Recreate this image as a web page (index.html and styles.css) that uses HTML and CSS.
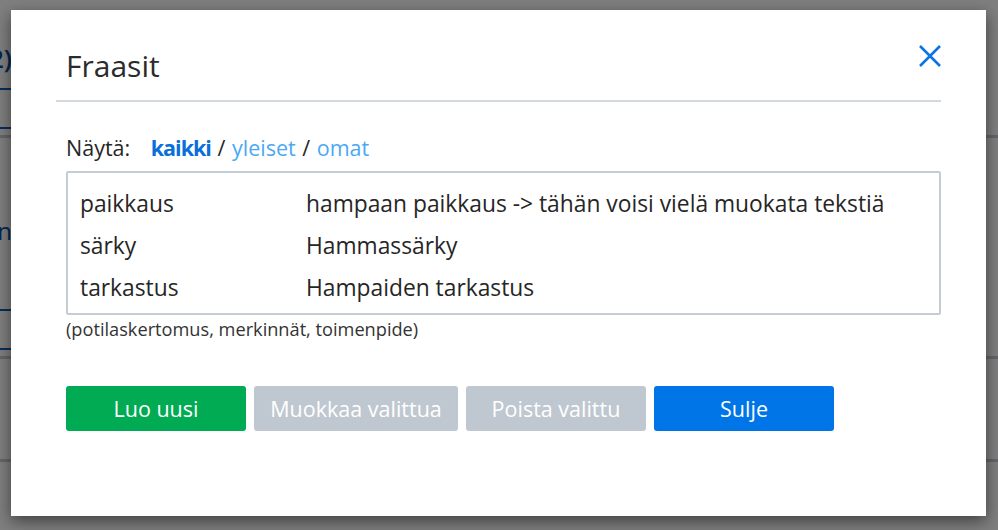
FILE: index.html
```html
<!DOCTYPE html>
<html>
	<head>
		<meta charset="utf-8">
		<title>Fraasit</title>
		<link rel="stylesheet" href="styles.css">
	</head>

	<body>
		<!-- underlying page, dimmed by the backdrop -->
		<div class="page">
			<div class="page-head"><span class="page-title">Käynnit (2)</span></div>
			<div class="page-tab"></div>
			<div class="page-rule"></div>
			<div class="page-row"><span class="page-link">Lisää merkintä uusi kirjoitus on</span></div>
			<div class="page-tab"></div>
			<div class="page-tab short"></div>
			<div class="page-rule"></div>
			<div class="page-gap"></div>
			<div class="page-rule"></div>
		</div>

		<div class="backdrop"></div>

		<div class="modal">
			<div class="modal-header">
				<h2 class="modal-title">Fraasit</h2>
				<button class="close" type="button" aria-label="Sulje">
					<svg width="22" height="22" viewBox="0 0 22 22">
						<path d="M1 1 L21 21 M21 1 L1 21" stroke="#0a74e6" stroke-width="2.6" fill="none"/>
					</svg>
				</button>
			</div>

			<div class="modal-body">
				<div class="filter">
					<span class="filter-label">Näytä:</span>
					<a class="filter-link active">kaikki</a>
					<span class="sep">/</span>
					<a class="filter-link">yleiset</a>
					<span class="sep">/</span>
					<a class="filter-link">omat</a>
				</div>

				<div class="phrases">
					<div class="phrase">
						<span class="phrase-key">paikkaus</span>
						<span class="phrase-text">hampaan paikkaus -&gt; tähän voisi vielä muokata tekstiä</span>
					</div>
					<div class="phrase">
						<span class="phrase-key">särky</span>
						<span class="phrase-text">Hammassärky</span>
					</div>
					<div class="phrase">
						<span class="phrase-key">tarkastus</span>
						<span class="phrase-text">Hampaiden tarkastus</span>
					</div>
				</div>
				<p class="hint">(potilaskertomus, merkinnät, toimenpide)</p>

				<div class="actions">
					<button class="btn btn-green" type="button">Luo uusi</button>
					<button class="btn btn-grey wide" type="button">Muokkaa valittua</button>
					<button class="btn btn-grey" type="button">Poista valittu</button>
					<button class="btn btn-blue" type="button">Sulje</button>
				</div>
			</div>
		</div>
	</body>
</html>
```

FILE: styles.css
```css
html, body {
	margin: 0;
	height: 100%;
}

body {
	font-family: "Open Sans", "Noto Sans", sans-serif;
	color: #262626;
	background: #fff;
	overflow: hidden;
}

/* page behind the dialog */
.page {
	background: #fff;
	height: 100%;
}

.page-head {
	height: 88px;
	border-bottom: 2px solid #0b5fb8;
	display: flex;
	justify-content: flex-end;
	align-items: center;
	width: 12px;
}

.page-title {
	white-space: nowrap;
	color: #0b4f9c;
	font-size: 26px;
	font-weight: 600;
	margin-top: 28px;
}

.page-tab {
	height: 37px;
	width: 300px;
	border-bottom: 2px solid #0b5fb8;
}

.page-rule {
	height: 3px;
	background: #c8cdd4;
	margin-top: 6px;
}

.page-row {
	height: 134px;
	width: 12px;
	display: flex;
	justify-content: flex-end;
	align-items: center;
}

.page-link {
	white-space: nowrap;
	color: #0b4f9c;
	font-size: 24px;
	margin-top: 50px;
}

.page-gap {
	height: 94px;
}

.backdrop {
	position: absolute;
	inset: 0;
	background: rgba(0, 0, 0, 0.5);
}

/* dialog */
.modal {
	position: absolute;
	left: 11px;
	top: 10px;
	width: 975px;
	height: 506px;
	background: #fff;
	box-shadow: 0 5px 15px rgba(0, 0, 0, 0.5);
	padding: 0 45px;
	box-sizing: border-box;
}

.modal-header {
	display: flex;
	align-items: center;
	justify-content: space-between;
	height: 90px;
	border-bottom: 2px solid #d3d9e0;
}

.modal-title {
	margin: 20px 0 0 10px;
	font-size: 30px;
	font-weight: 400;
	color: #2b2b2b;
}

.close {
	border: 0;
	background: none;
	padding: 0;
	margin: 2px 0 0 0;
	display: flex;
	cursor: pointer;
}

.modal-body {
	padding: 0 0 0 10px;
}

.filter {
	font-size: 21.5px;
	margin-top: 31px;
	line-height: 30px;
}

.filter-label {
	margin-right: 15px;
}

.filter-link {
	color: #4aa9f5;
	cursor: pointer;
}

.filter-link.active {
	color: #0a6fd8;
	font-weight: 700;
	letter-spacing: -1px;
}

.sep {
	margin: 0 1px;
}

.phrases {
	margin-top: 8px;
	border: 2px solid #c5ccd5;
	border-radius: 2px;
	padding: 9px 12px 5px;
}

.phrase {
	display: flex;
	font-size: 22.8px;
	height: 42px;
	align-items: center;
}

.phrase-key {
	width: 226px;
}

.hint {
	margin: 2px 0 0 0;
	font-size: 18.2px;
	color: #333;
}

.actions {
	display: flex;
	gap: 8px;
	margin-top: 45px;
}

.btn {
	width: 180px;
	height: 45px;
	border: 0;
	border-radius: 3px;
	color: #fff;
	font-family: inherit;
	font-size: 21.5px;
	cursor: pointer;
}

.btn.wide {
	width: 204px;
}

.btn-green {
	background: #00ab53;
}

.btn-grey {
	background: #bfc7d0;
}

.btn-blue {
	background: #0075e8;
}
```
